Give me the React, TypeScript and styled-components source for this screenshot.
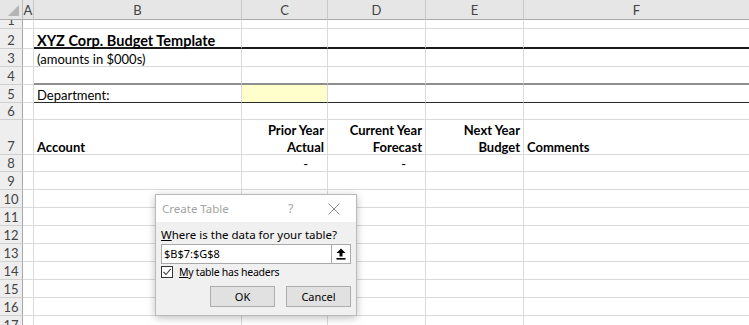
import React from "react";
import styled, { createGlobalStyle } from "styled-components";

const GlobalStyle = createGlobalStyle`
  html, body { margin: 0; padding: 0; background: #fff; }
  body { overflow: hidden; }
`;

type Edge = "thick" | "gray" | "thin" | undefined;

type CellData = {
  text?: React.ReactNode;
  bold?: boolean;
  right?: boolean;
  pad?: number;
  fill?: string;
  edge?: Edge;
};

const colWidths = [23, 11, 208, 86, 98, 98, 226];
const letters = ["", "A", "B", "C", "D", "E", "F"];
const rowHeights = [9, 20, 18, 18, 18, 17, 35, 17, 18, 18, 18, 18, 18, 18, 18, 18, 18];

const sheetRows: Record<number, Record<number, CellData>> = {
  2: {
    2: { text: "XYZ Corp. Budget Template", bold: true, edge: "thick" },
    3: { edge: "thick" },
    4: { edge: "thick" },
    5: { edge: "thick" },
    6: { edge: "thick" },
  },
  3: { 2: { text: "(amounts in $000s)" } },
  4: {
    2: { edge: "gray" },
    3: { edge: "gray" },
    4: { edge: "gray" },
    5: { edge: "gray" },
    6: { edge: "gray" },
  },
  5: {
    2: { text: "Department:", edge: "thin" },
    3: { fill: "#ffffcc", edge: "thin" },
    4: { edge: "thin" },
    5: { edge: "thin" },
    6: { edge: "thin" },
  },
  7: {
    2: { text: "Account", bold: true },
    3: { text: <>Prior Year<br />Actual</>, bold: true, right: true },
    4: { text: <>Current Year<br />Forecast</>, bold: true, right: true },
    5: { text: <>Next Year<br />Budget</>, bold: true, right: true },
    6: { text: "Comments", bold: true },
  },
  8: {
    3: { text: "-", right: true, pad: 19 },
    4: { text: "-", right: true, pad: 19 },
  },
};

const edgeStyle = (edge: Edge) => {
  if (edge === "thick") return "2px solid #1b1b1b";
  if (edge === "gray") return "2px solid #8e8e8e";
  if (edge === "thin") return "1px solid #2a2a2a";
  return "1px solid #dadada";
};

const Page = styled.div`
  position: relative;
  width: 749px;
  height: 325px;
  overflow: hidden;
  font-family: Lato, "Liberation Sans", sans-serif;
`;

const Sheet = styled.div`
  display: grid;
  grid-template-columns: ${colWidths.map((w) => `${w}px`).join(" ")};
  grid-template-rows: 20px ${rowHeights.map((h) => `${h}px`).join(" ")};
`;

const Corner = styled.div`
  position: relative;
  background: #e6e6e6;
  border-right: 1px solid #bdbdbd;
  border-bottom: 1px solid #ababab;
  box-sizing: border-box;
  &::after {
    content: "";
    position: absolute;
    right: 3px;
    bottom: 3px;
    width: 0;
    height: 0;
    border-left: 11px solid transparent;
    border-bottom: 11px solid #b5b5b5;
  }
`;

const ColHead = styled.div`
  display: flex;
  align-items: center;
  justify-content: center;
  background: #e6e6e6;
  border-right: 1px solid #c8c8c8;
  border-bottom: 1px solid #ababab;
  box-sizing: border-box;
  color: #444;
  font-size: 13px;
  padding-top: 1px;
`;

const RowHead = styled.div`
  display: flex;
  align-items: flex-end;
  justify-content: center;
  overflow: hidden;
  background: #eeeeee;
  border-right: 1px solid #a8a8a8;
  border-bottom: 1px solid #d0d0d0;
  box-sizing: border-box;
  color: #444;
  font-size: 13px;
  line-height: 16px;
`;

const Cell = styled.div<{ $bold?: boolean; $right?: boolean; $pad?: number; $fill?: string; $edge: Edge }>`
  display: flex;
  align-items: flex-end;
  justify-content: ${(p) => (p.$right ? "flex-end" : "flex-start")};
  text-align: ${(p) => (p.$right ? "right" : "left")};
  box-sizing: border-box;
  padding: 0 ${(p) => p.$pad ?? 3}px 0 3px;
  background: ${(p) => p.$fill ?? "#fff"};
  border-right: 1px solid #dadada;
  border-bottom: ${(p) => edgeStyle(p.$edge)};
  font-size: 13px;
  font-weight: ${(p) => (p.$bold ? 700 : 400)};
  color: #000;
  line-height: 17px;
  white-space: nowrap;
  overflow: visible;
`;

const CellText = styled.span<{ $title?: boolean }>`
  font-size: ${(p) => (p.$title ? "14.5px" : "13px")};
  line-height: 17px;
  margin-bottom: -2px;
`;

const Dialog = styled.div`
  position: absolute;
  left: 155px;
  top: 194px;
  width: 202px;
  height: 122px;
  box-sizing: border-box;
  display: flex;
  flex-direction: column;
  background: #f0f0f0;
  border: 1px solid #b9b9b9;
  box-shadow: 0 2px 8px rgba(0, 0, 0, 0.25);
  font-family: "Noto Sans", "Open Sans", sans-serif;
  font-size: 11px;
  color: #000;
`;

const TitleBar = styled.div`
  display: flex;
  align-items: center;
  height: 28px;
  background: #fff;
  padding: 0 0 0 6px;
`;

const Title = styled.div`
  flex: 1;
  color: #a3a3a3;
  font-size: 11.5px;
`;

const Help = styled.div`
  width: 14px;
  color: #a3a3a3;
  font-size: 12.5px;
  margin-right: 26px;
`;

const Close = styled.div`
  width: 12px;
  height: 12px;
  margin-right: 16px;
  display: flex;
`;

const Body = styled.div`
  display: flex;
  flex-direction: column;
  padding: 5px 5px 8px 5px;
`;

const Prompt = styled.div`
  height: 16px;
  line-height: 16px;
  margin-bottom: 1px;
  font-size: 11.5px;
`;

const RangeField = styled.div`
  display: flex;
  align-items: stretch;
  height: 20px;
  box-sizing: border-box;
  background: #fff;
  border: 1px solid #a9a9a9;
`;

const RangeText = styled.div`
  flex: 1;
  padding-left: 2px;
  line-height: 18px;
`;

const Collapse = styled.div`
  width: 18px;
  display: flex;
  align-items: center;
  justify-content: center;
  border-left: 1px solid #a9a9a9;
  background: #fdfdfd;
`;

const CheckRow = styled.label`
  display: flex;
  align-items: center;
  gap: 6px;
  height: 16px;
  font-size: 10.5px;
  letter-spacing: -0.25px;
`;

const Box = styled.div`
  width: 12px;
  height: 12px;
  box-sizing: border-box;
  border: 1px solid #333;
  background: #fff;
  display: flex;
`;

const Buttons = styled.div`
  display: flex;
  justify-content: flex-end;
  gap: 11px;
  margin-top: 6px;
`;

const Button = styled.div`
  width: 65px;
  height: 21px;
  box-sizing: border-box;
  display: flex;
  align-items: center;
  justify-content: center;
  background: #e1e1e1;
  border: 1px solid #adadad;
`;

export default function App() {
  return (
    <Page>
      <GlobalStyle />
      <Sheet>
        <Corner />
        {letters.slice(1).map((l) => (
          <ColHead key={l}>{l}</ColHead>
        ))}
        {rowHeights.map((_, i) => {
          const r = i + 1;
          const data = sheetRows[r] ?? {};
          return (
            <React.Fragment key={r}>
              <RowHead>{r}</RowHead>
              {colWidths.slice(1).map((_, c) => {
                const d = data[c + 1] ?? {};
                return (
                  <Cell
                    key={c}
                    $bold={d.bold}
                    $right={d.right}
                    $pad={d.pad}
                    $fill={d.fill}
                    $edge={d.edge}
                  >
                    {d.text ? <CellText $title={r === 2}>{d.text}</CellText> : null}
                  </Cell>
                );
              })}
            </React.Fragment>
          );
        })}
      </Sheet>

      <Dialog>
        <TitleBar>
          <Title>Create Table</Title>
          <Help>?</Help>
          <Close>
            <svg width="12" height="12" viewBox="0 0 12 12">
              <path d="M0.5 0.5 L11.5 11.5 M11.5 0.5 L0.5 11.5" stroke="#8a8a8a" strokeWidth="1" fill="none" />
            </svg>
          </Close>
        </TitleBar>
        <Body>
          <Prompt>
            <u>W</u>here is the data for your table?
          </Prompt>
          <RangeField>
            <RangeText>$B$7:$G$8</RangeText>
            <Collapse>
              <svg width="10" height="12" viewBox="0 0 10 12">
                <path d="M5 0.5 L9.5 5 L6.5 5 L6.5 8.5 L3.5 8.5 L3.5 5 L0.5 5 Z" fill="#000" />
                <rect x="0.5" y="10" width="9" height="1.6" fill="#000" />
              </svg>
            </Collapse>
          </RangeField>
          <CheckRow>
            <Box>
              <svg width="10" height="10" viewBox="0 0 10 10">
                <path d="M1.5 5 L4 7.5 L8.8 1.8" stroke="#444" strokeWidth="1.1" fill="none" />
              </svg>
            </Box>
            <span>
              <u>M</u>y table has headers
            </span>
          </CheckRow>
          <Buttons>
            <Button>OK</Button>
            <Button>Cancel</Button>
          </Buttons>
        </Body>
      </Dialog>
    </Page>
  );
}
